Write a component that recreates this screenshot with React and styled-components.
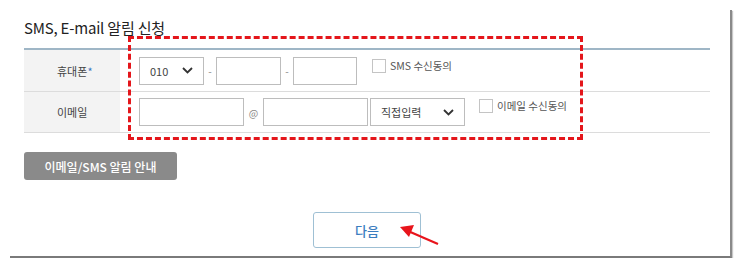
import styled, { createGlobalStyle } from 'styled-components';

const GlobalStyle = createGlobalStyle`
  html, body {
    margin: 0;
    padding: 0;
    background: #ffffff;
  }
  body {
    font-family: "Noto Sans CJK KR", "Noto Sans", sans-serif;
    color: #333;
  }
`;

const Frame = styled.div`
  position: relative;
  box-sizing: border-box;
  margin: 10px 0 0 10px;
  width: 722px;
  height: 248px;
  padding: 6px 0 0 14px;
  border-right: 2px solid #8a8a8a;
  border-bottom: 2px solid #7a7a7a;
  box-shadow: 1px 1px 1px #c8c8c8;
`;

const Title = styled.h2`
  margin: 0;
  font-size: 15px;
  font-weight: 400;
  line-height: 24px;
  color: #222;
  letter-spacing: -0.2px;
`;

const Table = styled.div`
  margin-top: 8px;
  width: 686px;
  border-top: 2px solid #9fb6c6;
`;

const Row = styled.div`
  display: flex;
  height: ${(p) => p.h}px;
  border-bottom: 1px solid #dcdcdc;
`;

const Label = styled.div`
  width: 96px;
  flex: none;
  background: #f3f3f3;
  display: flex;
  align-items: center;
  padding-left: 33px;
  box-sizing: border-box;
  font-size: 11px;
  color: #444;
`;

const Star = styled.span`
  color: #3a78c2;
`;

const Value = styled.div`
  display: flex;
  align-items: center;
  padding-left: 19px;
`;

const Box = styled.div`
  box-sizing: border-box;
  width: ${(p) => p.w}px;
  height: 28px;
  margin-left: ${(p) => p.ml || 0}px;
  border: 1px solid #bdbdbd;
  background: #fff;
  display: flex;
  align-items: center;
  justify-content: space-between;
  padding: 0 10px;
  font-size: 11px;
  color: #444;
`;

const Sep = styled.span`
  width: ${(p) => p.w}px;
  text-align: center;
  font-size: 10px;
  color: #888;
  flex: none;
`;

const Agree = styled.label`
  display: flex;
  align-items: center;
  gap: 4px;
  margin-left: ${(p) => p.ml}px;
  align-self: flex-start;
  margin-top: ${(p) => p.mt}px;
  font-size: 10.5px;
  color: #555;
`;

const Check = styled.span`
  width: 14px;
  height: 14px;
  box-sizing: border-box;
  border: 1px solid #c4c4c4;
  background: #fff;
`;

const GuideButton = styled.button`
  margin-top: 19px;
  width: 153px;
  height: 28px;
  border: none;
  border-radius: 3px;
  background: #8a8a8a;
  color: #fff;
  font-family: inherit;
  font-size: 12px;
  font-weight: 500;
  padding: 0;
`;

const Footer = styled.div`
  width: 686px;
  display: flex;
  justify-content: center;
  margin-top: 32px;
`;

const NextButton = styled.button`
  width: 108px;
  height: 36px;
  border: 1px solid #9fc0d4;
  border-radius: 3px;
  background: #fff;
  color: #3b7dbf;
  font-family: inherit;
  font-size: 13px;
  font-weight: 500;
  padding: 0;
`;

const Highlight = styled.div`
  position: absolute;
  left: 118px;
  top: 26px;
  width: 455px;
  height: 104px;
  box-sizing: border-box;
  border: 3px dashed #e4161b;
  pointer-events: none;
`;

const Arrow = styled.svg`
  position: absolute;
  left: 376px;
  top: 203px;
`;

const Chevron = () => (
  <svg width="11" height="7" viewBox="0 0 11 7">
    <path d="M1 1l4.5 4.5L10 1" fill="none" stroke="#333" strokeWidth="1.8" />
  </svg>
);

export default function App() {
  return (
    <>
      <GlobalStyle />
      <Frame>
        <Title>SMS, E-mail 알림 신청</Title>
        <Table>
          <Row h={41}>
            <Label>
              휴대폰<Star>*</Star>
            </Label>
            <Value>
              <Box w={65}>
                010 <Chevron />
              </Box>
              <Sep w={12}>-</Sep>
              <Box w={65} />
              <Sep w={12}>-</Sep>
              <Box w={64} />
              <Agree ml={15} mt={8}>
                <Check />
                SMS 수신동의
              </Agree>
            </Value>
          </Row>
          <Row h={40}>
            <Label>이메일</Label>
            <Value>
              <Box w={105} />
              <Sep w={19}>@</Sep>
              <Box w={105} />
              <Box w={95} ml={2}>
                직접입력 <Chevron />
              </Box>
              <Agree ml={14} mt={6}>
                <Check />
                이메일 수신동의
              </Agree>
            </Value>
          </Row>
        </Table>
        <GuideButton>이메일/SMS 알림 안내</GuideButton>
        <Footer>
          <NextButton>다음</NextButton>
        </Footer>
        <Highlight />
        <Arrow width="56" height="36" viewBox="0 0 56 36">
          <line x1="52" y1="31" x2="22" y2="18" stroke="#e8141b" strokeWidth="2.2" />
          <polygon points="14,14 28,12 23,24" fill="#e8141b" />
        </Arrow>
      </Frame>
    </>
  );
}
